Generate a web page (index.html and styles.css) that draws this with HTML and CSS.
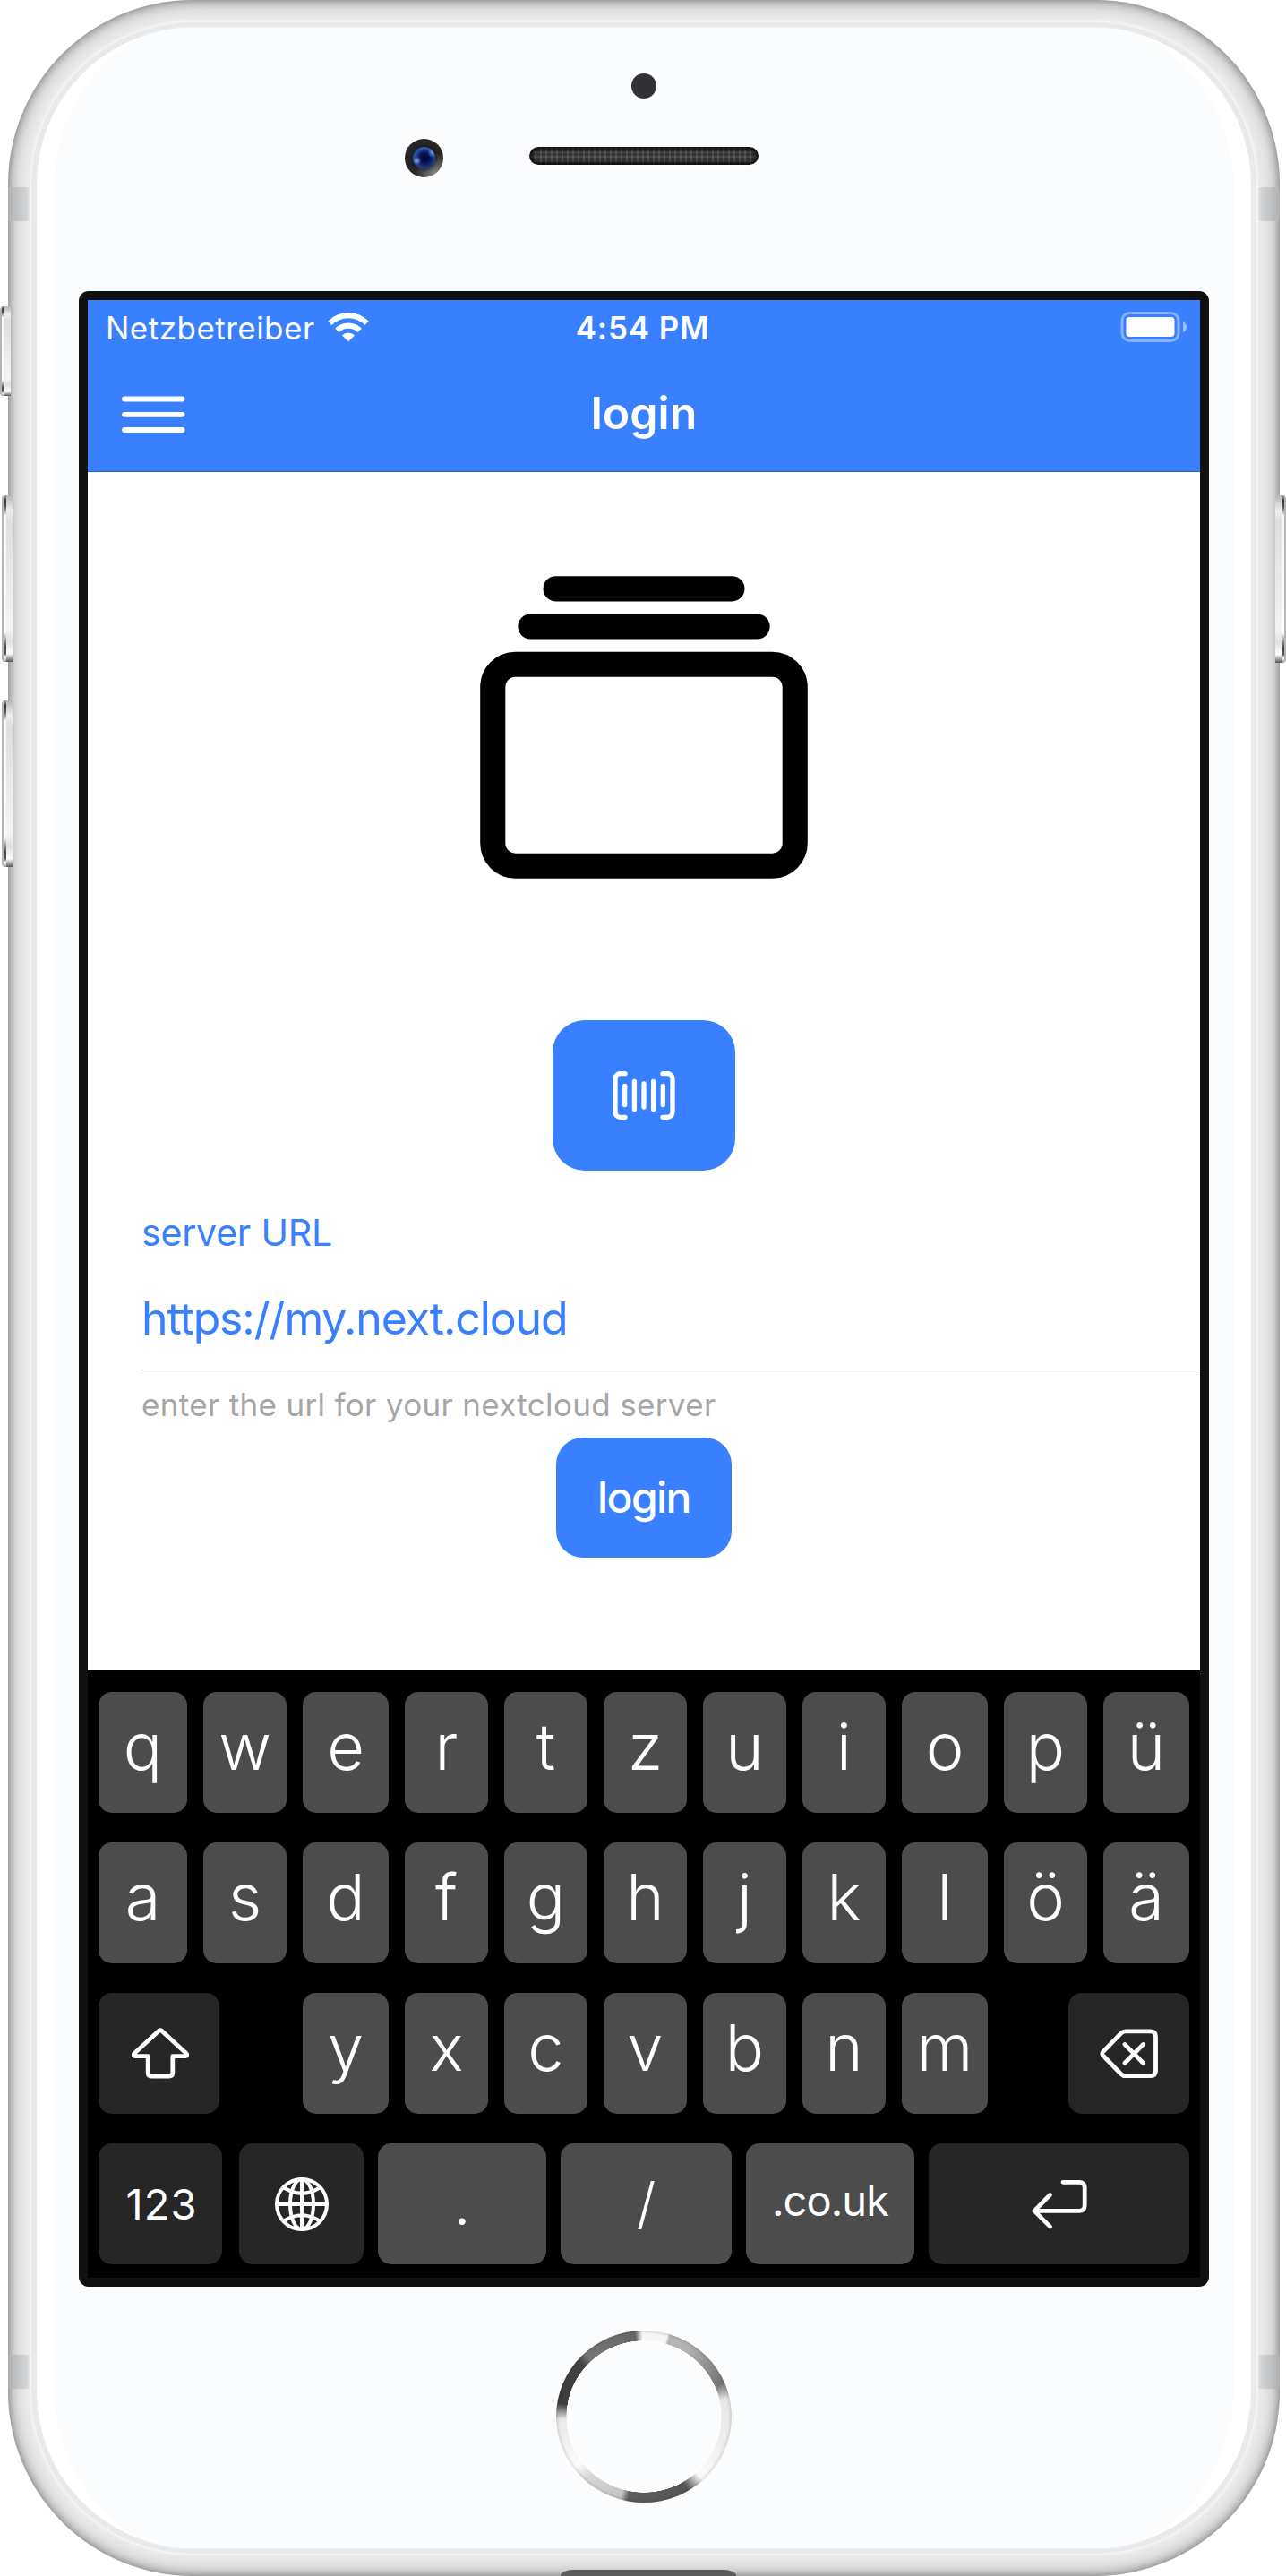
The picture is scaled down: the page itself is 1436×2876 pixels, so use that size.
FILE: index.html
```html
<!DOCTYPE html>
<html lang="en">
<head>
<meta charset="utf-8">
<title>login</title>
<link rel="stylesheet" href="styles.css">
</head>
<body>
<div class="device">
  <i class="side-button mute"></i>
  <i class="side-button volume-up"></i>
  <i class="side-button volume-down"></i>
  <div class="frame">
    <i class="antenna top-left"></i><i class="antenna top-right"></i>
    <i class="antenna bottom-left"></i><i class="antenna bottom-right"></i>
    <div class="glass"><div class="panel"></div></div>
    <i class="connector"></i>
  </div>
  <i class="side-button power"></i>
  <i class="sensor"></i>
  <i class="camera"><i class="lens"></i></i>
  <i class="speaker"></i>

  <div class="screen">
    <header class="header">
      <div class="status">
        <div class="carrier">
          <span>Netzbetreiber</span>
          <svg class="wifi" width="46" height="34" viewBox="0 0 46 34" fill="#fff">
            <path d="M.3 10.5a32 32 0 0 1 45.4 0L41.4 15a26 26 0 0 0-36.8 0Z"/>
            <path d="M8.2 18.5a21 21 0 0 1 29.6 0l-4.3 4.5a15 15 0 0 0-21 0Z"/>
            <path d="M16 26.4a10 10 0 0 1 14 0l-7 6.9Z"/>
          </svg>
        </div>
        <div class="time">4:54 PM</div>
        <svg class="battery" width="74" height="36" viewBox="0 0 74 36" fill="#fff">
          <rect x="2" y="2.5" width="63" height="31" rx="8.5" fill="none" stroke="#fff" stroke-width="3" opacity=".4"/>
          <rect x="6.500" y="7" width="54" height="22" rx="4"/>
          <path d="M70 12q4 2 4 6t-4 6z" opacity=".5"/>
        </svg>
      </div>
      <div class="toolbar">
        <svg class="menu" width="71" height="42" viewBox="0 0 71 42" stroke="#fff" stroke-width="5.800" stroke-linecap="round"><path d="M3 3.500h64.500M3 20.800h64.500M3 38h64.500"/></svg>
        <h1 class="title">login</h1>
      </div>
    </header>

    <main class="content">
      <svg class="logo" width="450" height="450" viewBox="0 0 512 512" fill="none" stroke="#000" stroke-width="32" stroke-linecap="round">
        <rect x="64" y="176" width="384" height="256" rx="28.870"/>
        <path d="M144 80h224M112 128h288"/>
      </svg>
      <button class="button scan">
        <svg width="70" height="54" viewBox="0 0 70 54" fill="none" stroke="#fff" stroke-width="5.300" stroke-linecap="round">
          <path d="M14 2.700H8.500a5.500 5.500 0 0 0-5.500 5.500v37.600a5.500 5.500 0 0 0 5.500 5.500H14M56 2.700h5.500a5.500 5.500 0 0 1 5.500 5.500v37.600a5.500 5.500 0 0 1-5.500 5.500H56"/>
          <path d="M13.700 16.400v21.200M24.400 11.500v31M35 14v26M45.600 11.500v31M56.300 16.400v21.200"/>
        </svg>
      </button>
      <div class="field">
        <div class="label">server URL</div>
        <div class="value">https://my.next.cloud</div>
      </div>
      <div class="hint">enter the url for your nextcloud server</div>
      <button class="button submit">login</button>
    </main>

    <div class="keyboard">
      <div class="row letters">
        <b>q</b><b>w</b><b>e</b><b>r</b><b>t</b><b>z</b><b>u</b><b>i</b><b>o</b><b>p</b><b>ü</b>
      </div>
      <div class="row letters">
        <b>a</b><b>s</b><b>d</b><b>f</b><b>g</b><b>h</b><b>j</b><b>k</b><b>l</b><b>ö</b><b>ä</b>
      </div>
      <div class="row third">
        <b class="dark shift"><svg width="64" height="57" viewBox="0 0 64 57"><path d="M30.200 3.400 3 28.600c-1.400 1.400-.8 3 1.200 3h14v18.500q0 4 4 4h19.600q4 0 4-4V31.600h14c2 0 2.600-1.600 1.200-3L33.800 3.400q-1.800-1.500-3.600 0Z"/></svg></b>
        <b class="first">y</b><b>x</b><b>c</b><b>v</b><b>b</b><b>n</b><b>m</b>
        <b class="dark backspace"><svg width="66" height="56" viewBox="0 0 66 56"><path d="M29 2.900h27.500q6 0 6 6v37.800q0 6-6 6H29q-3 0-5-2L4 30.200q-2.400-2.400 0-4.800L24 4.900q2-2 5-2ZM28 17.500 48.500 38.200M48.500 17.500 28 38.200"/></svg></b>
      </div>
      <div class="row fourth">
        <b class="dark num">123</b>
        <b class="dark"><svg class="globe" width="60" height="60" viewBox="0 0 60 60"><circle cx="30" cy="30" r="28"/><ellipse cx="30" cy="30" rx="13" ry="28"/><path d="M30 2v56M2 30h56M10 11.500q20 12.500 40 0M10 48.500q20-12.500 40 0"/></svg></b>
        <b class="dot">.</b>
        <b class="slash">/</b>
        <b class="domain">.co.uk</b>
        <b class="dark"><svg width="64" height="56" viewBox="0 0 64 56"><path d="M36 3.300h18q6.200 0 6.200 6.200v19.700q0 6.200-6.200 6.200H4M21.500 17.500 4 35.400l17.500 17.500"/></svg></b>
      </div>
    </div>
  </div>
  <div class="home"></div>
</div>
</body>
</html>
```
FILE: styles.css
```css
* { box-sizing: border-box; }
body { margin: 0; background: #fff; font-family: Inter, "Liberation Sans", sans-serif; }

/* Device shell */
.device {
  position: relative;
  width: 1436px;
  height: 2876px;
  padding-top: 325px;
  display: flex;
  flex-direction: column;
  align-items: center;
  overflow: hidden;
}
.frame {
  position: absolute;
  inset: 0 7px 0 9px;
  border-radius: 206px;
  background: #ececec;
  box-shadow: inset 0 0 10px rgba(0,0,0,.36), inset 0 0 24px rgba(0,0,0,.36);
  overflow: hidden;
}
.glass {
  position: absolute;
  inset: 25px 26px;
  border-radius: 181px;
  border: 6px solid #e8eaec;
  background: #fff;
  box-shadow: 0 0 3px 2px #f7f7f8;
}
.panel {
  position: absolute;
  inset: 0 19px;
  border-radius: 150px / 185px;
  background: #fafcfe;
  box-shadow: 0 0 3px #fafcfe;
}
.antenna {
  position: absolute;
  width: 24px;
  height: 38px;
  background: linear-gradient(90deg, #aeafb0, #d8dadc);
}
.top-left { left: 0; top: 209px; }
.bottom-left { left: 0; top: 2629px; }
.top-right { right: 0; top: 209px; transform: scaleX(-1); }
.bottom-right { right: 0; top: 2629px; transform: scaleX(-1); }
.connector {
  position: absolute;
  left: 617px;
  bottom: 0;
  width: 196px;
  height: 7px;
  border-radius: 14px 14px 0 0 / 7px 7px 0 0;
  background: #5c5c5c;
}
.side-button {
  position: absolute;
  z-index: 1;
  left: 2px;
  width: 12px;
  height: 186px;
  border-radius: 4px 0 0 4px;
  border-left: 2px solid #b4b4b4;
  background:
    linear-gradient(#aaa, #333 3%, #555 7%, #f6f6f6 12%, #fff 82%, #444 91%, #555 95%, #fff 97%, #999) 0 0 / 3px 100% no-repeat,
    linear-gradient(#b5b5b5, #eee 9%, #dcdee0 16%, #f2f4f6 80%, #dfe0e2 88%, #fff 95%, #555);
}
.mute { top: 342px; left: 0; height: 100px; }
.volume-up { top: 553px; }
.volume-down { top: 782px; }
.power { left: auto; right: 0; top: 553px; height: 187px; transform: scaleX(-1); }
.sensor {
  position: absolute;
  left: 705px;
  top: 82px;
  width: 28px;
  height: 28px;
  border-radius: 50%;
  background: #323234;
}
.camera {
  position: absolute;
  left: 452px;
  top: 155px;
  width: 43px;
  height: 43px;
  border-radius: 50%;
  padding: 9px;
  background: radial-gradient(circle at 80% 92%, #8a8a8a, #262626 45%);
}
.lens {
  display: block;
  width: 25px;
  height: 25px;
  border-radius: 50%;
  background:
    radial-gradient(circle at 18% 62%, #86a8dc, transparent 18%),
    radial-gradient(circle at 88% 25%, #5f9bd8, transparent 20%),
    radial-gradient(circle at 55% 50%, #00083c 10%, #081a5e 35%, transparent 60%),
    linear-gradient(#2f56b4, #24366f);
  box-shadow: 0 0 5px #111;
}
.speaker {
  position: absolute;
  left: 591px;
  top: 164px;
  width: 256px;
  height: 20px;
  border-radius: 10px;
  background:
    repeating-linear-gradient(90deg, rgba(255,255,255,.13) 0 2px, transparent 2px 6px),
    repeating-linear-gradient(rgba(255,255,255,.09) 0 2px, transparent 2px 5px),
    #333;
  box-shadow: inset 0 0 4px 3px #0c0c0c, 0 2px 2px #fff;
}
.home {
  position: relative;
  left: 1px;
  flex: none;
  margin-top: 49px;
  width: 196px;
  height: 192px;
  border-radius: 50%;
  background:
    radial-gradient(closest-side, #fafcfe 86.500%, #fff 88%, transparent 88.500%),
    conic-gradient(#f6f6f6 0deg 16deg, #b4b4b4 18deg 32deg, #757575 67deg, #e6e6e6 78deg, #eee 105deg, #fbfbfb 137deg, #555 149deg, #5e5e5e 191deg, #c4c4c4 196deg, #d6d6d6 222deg, #fcfcfc 234deg, #e9e9e9 268deg, #3c3c3c 279deg, #424242 310deg, #777 317deg, #666 354deg, #f6f6f6 359deg);
  box-shadow: 0 0 3px #fff, inset 0 0 4px rgba(0,0,0,.25);
}

/* Screen */
.screen {
  position: relative;
  left: 1px;
  flex: none;
  width: 1262px;
  height: 2228px;
  border: 10px solid #101010;
  border-radius: 11px;
  background: #fff;
}
.header { height: 192px; background: #3880ff; border-bottom: 1px solid #2a62cc; color: #fff; }
.status {
  height: 60px;
  display: grid;
  grid-template-columns: 1fr auto 1fr;
  padding: 0 15px 0 20px;
  font-size: 35px;
  line-height: 62px;
}
.carrier { display: flex; gap: 14px; letter-spacing: .48px; }
.wifi { margin-top: 13px; }
.time { margin: 0 4px 0 -4px; font-weight: 600; letter-spacing: .89px; }
.battery { justify-self: end; margin-top: 12px; }
.toolbar {
  height: 132px;
  display: grid;
  grid-template-columns: 1fr auto 1fr;
  padding: 0 38px;
}
.menu { margin-top: 47px; }
.title { margin: 0; font-size: 50px; font-weight: 600; line-height: 132px; }

.content {
  height: 1338px;
  padding-top: 59.5px;
  display: flex;
  flex-direction: column;
  align-items: center;
}
.logo { flex: none; }
.button {
  flex: none;
  border: 0;
  padding: 0;
  background: #3880ff;
  color: #fff;
  font-family: inherit;
}
.scan {
  margin-top: 102.5px;
  width: 204px;
  height: 168px;
  border-radius: 36px;
  display: flex;
  align-items: center;
  justify-content: center;
}
.field {
  align-self: stretch;
  margin: 44px 0 0 60px;
  border-bottom: 1px solid #c8c7cc;
  color: #3880ff;
}
.label { font-size: 41px; line-height: 50px; letter-spacing: -.18px; }
.value { margin: 41px 0 27px; font-size: 50px; line-height: 60px; letter-spacing: -1.14px; }
.hint {
  align-self: flex-start;
  margin: 17px 0 0 60px;
  font-size: 35px;
  line-height: 42px;
  letter-spacing: .34px;
  color: #a6a6a6;
}
.submit {
  margin-top: 16px;
  width: 196px;
  height: 134px;
  border-radius: 30px;
  font-size: 48px;
  font-weight: 450;
  line-height: 134px;
  letter-spacing: -1.6px;
}

/* Keyboard */
.keyboard {
  height: 678px;
  padding: 24px 12px 15px;
  display: flex;
  flex-direction: column;
  gap: 33px;
  background: #000;
  color: #fff;
}
.row { display: grid; height: 135px; column-gap: 18px; }
.letters, .third { grid-template-columns: 99px 93px 96px 93px 93px 93px 93px 93px 96px 93px 96px; }
.fourth { grid-template-columns: 141px 139px 188px 191px 188px 291px; column-gap: 16px; }
.row b {
  border-radius: 15px;
  background: #4c4c4c;
  text-align: center;
  font-weight: 350;
  font-size: 72px;
  line-height: 121px;
}
.row .dark { background: #262626; display: flex; align-items: center; justify-content: center; }
.third .dark { width: 135px; }
.third .shift { padding-left: 2px; }
.third .first { grid-column: 3; }
.third .backspace { grid-column: 10 / 12; justify-self: end; }
.row svg { fill: none; stroke: #fff; stroke-width: 4.8; stroke-linecap: round; stroke-linejoin: round; }
.row .globe { stroke-width: 4; }
.row .num { width: 138px; padding-left: 3px; font-size: 47px; font-weight: 400; letter-spacing: 1.1px; line-height: 132px; }
.row .dot { line-height: 129px; }
.row .slash { font-size: 62px; line-height: 133px; }
.row .domain { font-size: 47px; font-weight: 400; letter-spacing: -.95px; line-height: 127px; }
```
